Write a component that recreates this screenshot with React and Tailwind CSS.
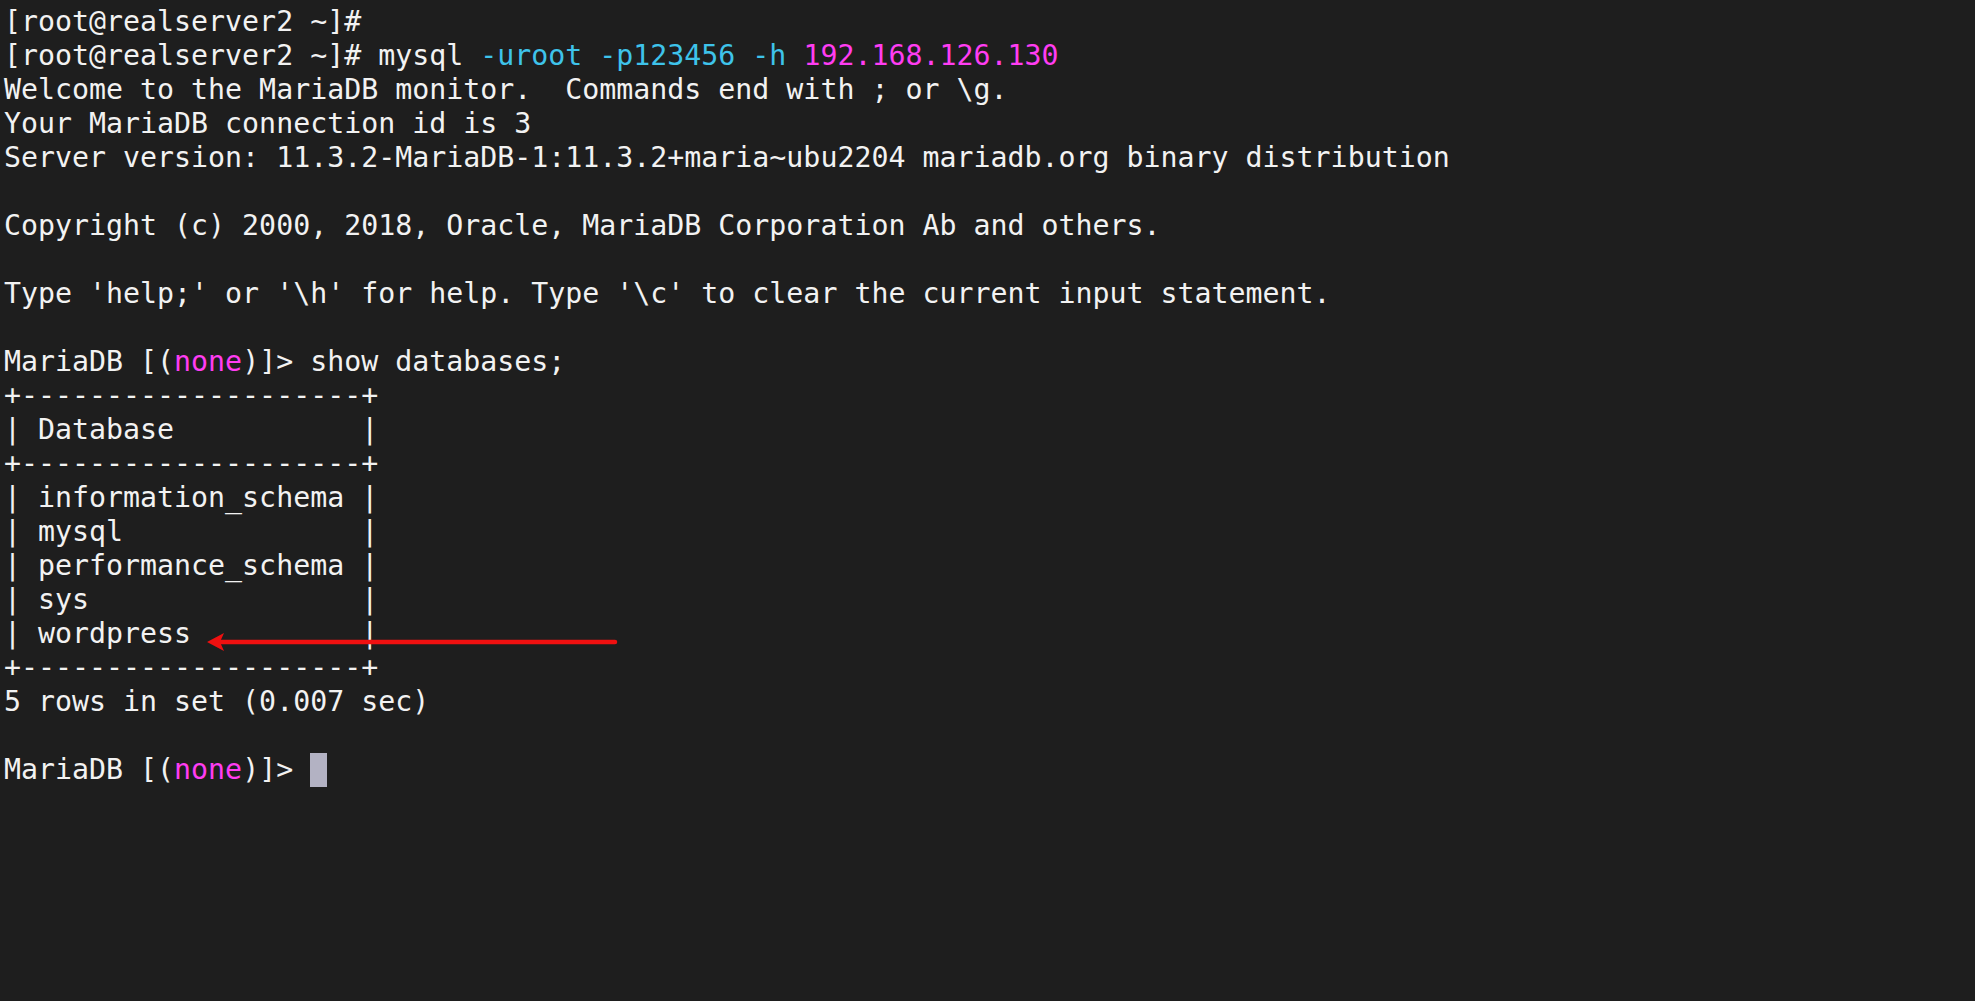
import React from "react";

const C = "text-[#3ec3ea]";
const M = "text-[#ff3df2]";

const lines = [
  [["[root@realserver2 ~]#"]],
  [["[root@realserver2 ~]# mysql "], ["-uroot -p123456 -h ", C], ["192.168.126.130", M]],
  [["Welcome to the MariaDB monitor.  Commands end with ; or \\g."]],
  [["Your MariaDB connection id is 3"]],
  [["Server version: 11.3.2-MariaDB-1:11.3.2+maria~ubu2204 mariadb.org binary distribution"]],
  [[""]],
  [["Copyright (c) 2000, 2018, Oracle, MariaDB Corporation Ab and others."]],
  [[""]],
  [["Type 'help;' or '\\h' for help. Type '\\c' to clear the current input statement."]],
  [[""]],
  [["MariaDB [("], ["none", M], [")]> show databases;"]],
  [["+--------------------+"]],
  [["| Database           |"]],
  [["+--------------------+"]],
  [["| information_schema |"]],
  [["| mysql              |"]],
  [["| performance_schema |"]],
  [["| sys                |"]],
  [["| wordpress          |"]],
  [["+--------------------+"]],
  [["5 rows in set (0.007 sec)"]],
  [[""]],
];

export default function App() {
  return (
    <div className="relative w-[1975px] h-[1001px] bg-[#1e1e1e] text-[#f2f2f2] overflow-hidden pt-[5px] pl-[4px] font-['DejaVu_Sans_Mono',monospace] text-[28.25px]">
      {lines.map((parts, i) => (
        <div key={i} className="h-[34px] leading-[34px] whitespace-pre">
          {parts.map(([t, cls], j) => (
            <span key={j} className={cls}>{t}</span>
          ))}
        </div>
      ))}
      <div className="h-[34px] leading-[34px] whitespace-pre flex items-center">
        <span>MariaDB [(</span>
        <span className={M}>none</span>
        <span>)]&gt; </span>
        <span className="inline-block w-[17px] h-[34px] bg-[#b3b2c3]" />
      </div>

      {/* red annotation arrow pointing at wordpress */}
      <svg className="absolute left-[200px] top-[628px]" width="420" height="28" viewBox="0 0 420 28">
        <line x1="18" y1="14" x2="415" y2="14" stroke="#f01010" strokeWidth="4.5" strokeLinecap="round" />
        <path d="M7 14 L24 5 L20 14 L24 23 Z" fill="#f01010" />
      </svg>
    </div>
  );
}
